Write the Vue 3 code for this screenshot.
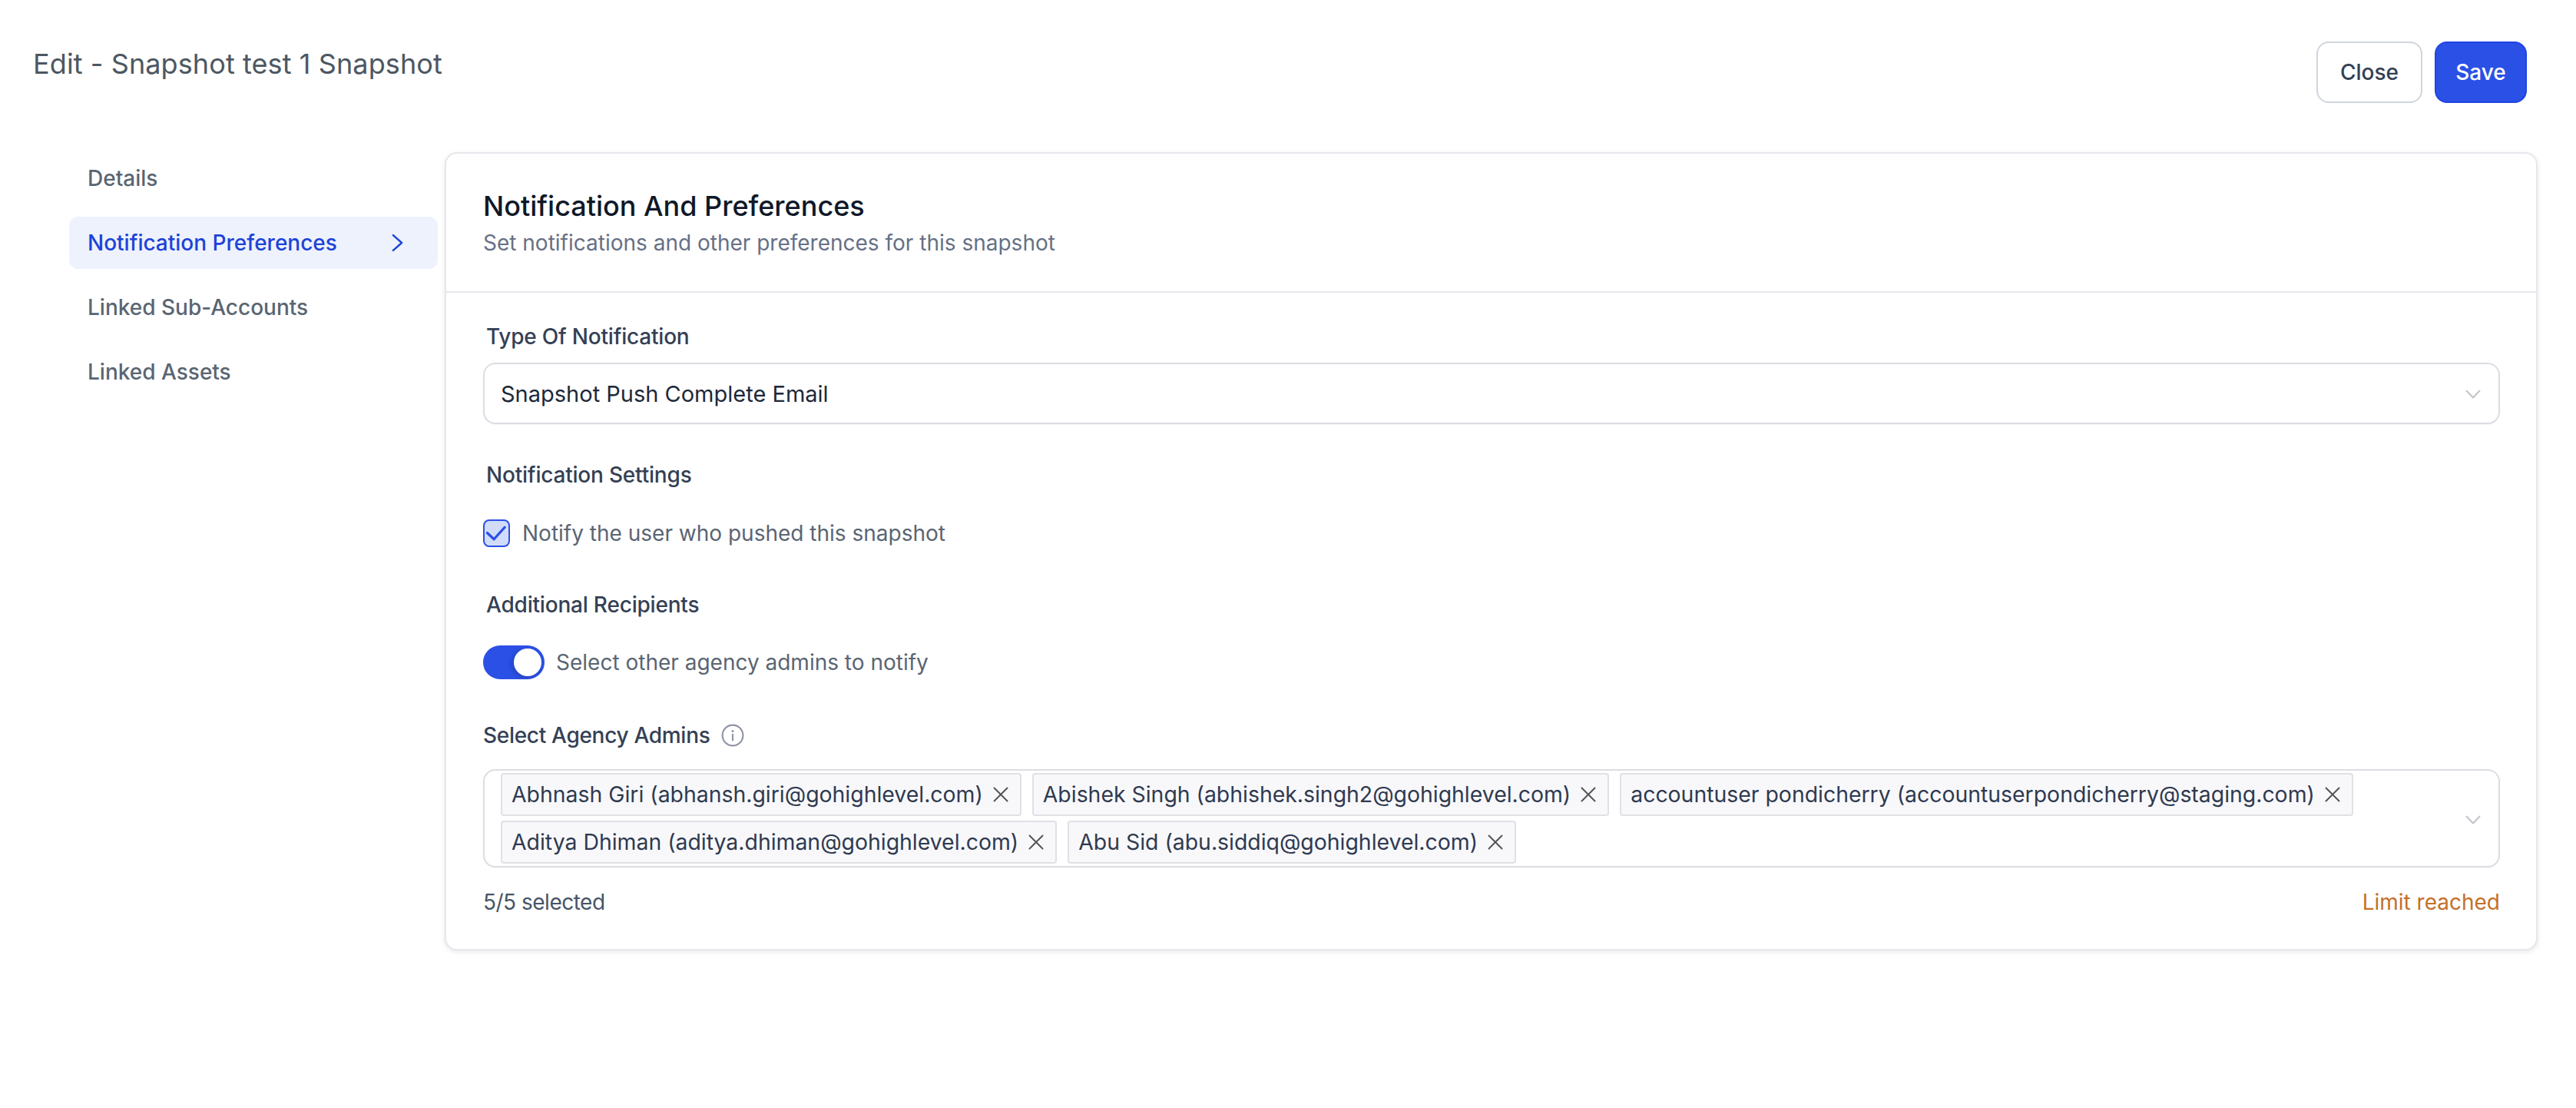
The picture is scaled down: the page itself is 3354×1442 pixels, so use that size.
<script setup>
const navItems = [
  { label: 'Details', active: false },
  { label: 'Notification Preferences', active: true },
  { label: 'Linked Sub-Accounts', active: false },
  { label: 'Linked Assets', active: false },
]
const admins = [
  'Abhnash Giri (abhansh.giri@gohighlevel.com)',
  'Abishek Singh (abhishek.singh2@gohighlevel.com)',
  'accountuser pondicherry (accountuserpondicherry@staging.com)',
  'Aditya Dhiman (aditya.dhiman@gohighlevel.com)',
  'Abu Sid (abu.siddiq@gohighlevel.com)',
]
</script>

<template>
  <div class="page">
    <header class="top">
      <h1 class="title">Edit - Snapshot test 1 Snapshot</h1>
      <div class="actions">
        <button class="btn close">Close</button>
        <button class="btn save">Save</button>
      </div>
    </header>
    <main class="main">
      <nav class="nav">
        <div v-for="item in navItems" :key="item.label" class="nav-item" :class="{ active: item.active }">
          <span>{{ item.label }}</span>
          <svg v-if="item.active" class="nav-chev" viewBox="0 0 16 24" fill="none">
            <path d="M2 1.5 L14 12 L2 22.5" stroke="currentColor" stroke-width="2.6" stroke-linecap="round" stroke-linejoin="round" />
          </svg>
        </div>
      </nav>
      <section class="card">
        <div class="card-head">
          <h2 class="card-title">Notification And Preferences</h2>
          <p class="card-sub">Set notifications and other preferences for this snapshot</p>
        </div>
        <div class="card-body">
          <div class="label inset">Type Of Notification</div>
          <div class="select single">
            <span>Snapshot Push Complete Email</span>
            <svg class="chev" viewBox="0 0 20 12" fill="none">
              <path d="M1 1 L10 10.5 L19 1" stroke="#c2c4c8" stroke-width="2" stroke-linejoin="round" />
            </svg>
          </div>

          <div class="label inset settings">Notification Settings</div>
          <div class="check-row">
            <span class="checkbox">
              <svg viewBox="0 0 32 32" fill="none">
                <path d="M3.5 15.5 L12.5 24 L27 8" stroke="#2b50e6" stroke-width="3.4" stroke-linecap="round" stroke-linejoin="round" />
              </svg>
            </span>
            <span class="muted">Notify the user who pushed this snapshot</span>
          </div>

          <div class="label inset recipients">Additional Recipients</div>
          <div class="toggle-row">
            <span class="toggle"><span class="knob"></span></span>
            <span class="muted">Select other agency admins to notify</span>
          </div>

          <div class="label admins-label">
            <span>Select Agency Admins</span>
            <svg class="info" viewBox="0 0 28 28" fill="none">
              <circle cx="14" cy="14" r="12.5" stroke="#8f94a8" stroke-width="2" />
              <path d="M14 13 V20" stroke="#8f94a8" stroke-width="2" stroke-linecap="round" />
              <circle cx="14" cy="8.8" r="1.4" fill="#8f94a8" />
            </svg>
          </div>
          <div class="select multi">
            <div class="tags">
              <span v-for="admin in admins" :key="admin" class="tag">
                <span>{{ admin }}</span>
                <svg class="tag-x" viewBox="0 0 20 20" fill="none">
                  <path d="M1.5 1.5 L18.5 18.5 M18.5 1.5 L1.5 18.5" stroke="#555" stroke-width="2" stroke-linecap="round" />
                </svg>
              </span>
            </div>
            <svg class="chev multi-chev" viewBox="0 0 20 12" fill="none">
              <path d="M1 1 L10 10.5 L19 1" stroke="#c2c4c8" stroke-width="2" stroke-linejoin="round" />
            </svg>
          </div>
          <div class="foot">
            <span class="count">5/5 selected</span>
            <span class="limit">Limit reached</span>
          </div>
        </div>
      </section>
    </main>
  </div>
</template>

<style>
html, body { margin: 0; background: #fff; }
</style>

<style scoped>
.page {
  box-sizing: border-box;
  width: 3354px;
  min-height: 1442px;
  padding: 54px 50px 0 43px;
  background: #fff;
  font-family: Inter, "Liberation Sans", sans-serif;
  font-size: 28px;
  line-height: 40px;
  color: #344054;
}
.top { display: flex; justify-content: space-between; align-items: flex-start; padding-right: 14px; }
.title { margin: 0; font-size: 36px; line-height: 58px; font-weight: 400; letter-spacing: 0.1px; color: #4d5761; }
.actions { display: flex; gap: 16px; }
.btn {
  box-sizing: border-box;
  height: 80px;
  border-radius: 16px;
  font-family: inherit;
  font-size: 28px;
  font-weight: 500;
  padding: 0;
}
.close { width: 138px; background: #fff; border: 2px solid #d0d5dd; color: #344054; }
.save { width: 120px; background: #2b50e6; border: 2px solid #1f45e3; color: #fff; }

.main { display: flex; margin-top: 64px; margin-left: 47px; gap: 9px; align-items: flex-start; }
.nav { width: 480px; display: flex; flex-direction: column; gap: 16px; flex: none; }
.nav-item {
  box-sizing: border-box;
  height: 68px;
  padding: 0 24px;
  border-radius: 12px;
  display: flex;
  align-items: center;
  justify-content: space-between;
  font-weight: 450;
  color: #5a6572;
}
.nav-item.active { background: #eef2fd; color: #1d43d8; }
.nav-chev { width: 15px; height: 24px; margin-right: 21px; }

.card {
  box-sizing: border-box;
  flex: 1;
  height: 1039px;
  background: #fff;
  border: 2px solid #e6e7ec;
  border-radius: 16px;
  box-shadow: 0 2px 6px rgba(16, 24, 40, 0.1);
}
.card-head { padding: 44px 48px 43px; border-bottom: 2px solid #e6e7ec; }
.card-title { margin: 0; font-size: 36px; line-height: 48px; font-weight: 500; color: #101828; }
.card-sub { margin: 4px 0 0; font-size: 28px; line-height: 40px; color: #667085; }
.card-body { padding: 37px 47px 41px 48px; }

.label { font-weight: 450; letter-spacing: -0.2px; color: #344054; }
.inset { padding-left: 4px; }
.settings { margin-top: 46px; }
.recipients { margin-top: 53px; }

.select {
  box-sizing: border-box;
  width: 100%;
  background: #fff;
  border: 2px solid #dcdde3;
  border-radius: 16px;
  position: relative;
  box-shadow: 0 1px 2px rgba(16, 24, 40, 0.04);
}
.single {
  height: 80px;
  margin-top: 14px;
  padding: 2px 23px 0 21px;
  display: flex;
  align-items: center;
  justify-content: space-between;
  font-size: 29px;
  color: #1d2939;
}
.chev { width: 20px; height: 12px; flex: none; }

.check-row { display: flex; align-items: center; gap: 16px; margin-top: 36px; height: 40px; }
.checkbox {
  box-sizing: border-box;
  width: 35px;
  height: 36px;
  border: 2px solid #2b50e6;
  border-radius: 8px;
  background: #d1dcfb;
  display: flex;
  align-items: center;
  justify-content: center;
}
.checkbox svg { width: 31px; height: 32px; }
.muted { color: #5a6572; }

.toggle-row { display: flex; align-items: center; gap: 15px; margin-top: 33px; height: 44px; }
.toggle {
  box-sizing: border-box;
  width: 80px;
  height: 44px;
  padding: 4px;
  border-radius: 22px;
  background: #2b50e6;
  display: flex;
  justify-content: flex-end;
}
.knob { width: 36px; height: 36px; border-radius: 50%; background: #fff; box-shadow: -3px 2px 6px rgba(16, 24, 40, 0.2); }

.admins-label { display: flex; align-items: center; gap: 15px; margin-top: 53px; letter-spacing: -0.3px; }
.info { width: 30px; height: 30px; }

.multi { height: 128px; margin-top: 24px; padding: 3px 60px 0 21px; }
.tags { display: flex; flex-wrap: wrap; gap: 6px 14px; }
.tag {
  box-sizing: border-box;
  height: 56px;
  padding: 0 15px 0 12px;
  display: flex;
  align-items: center;
  gap: 13px;
  background: #f8f8fb;
  border: 2px solid #e0e0e6;
  border-radius: 4px;
  font-size: 28.4px;
  color: #2f3a4f;
  white-space: nowrap;
}
.tag-x { width: 20px; height: 20px; flex: none; }
.multi-chev { position: absolute; right: 23px; top: 58px; }

.foot { display: flex; justify-content: space-between; margin-top: 25px; }
.count { color: #475467; letter-spacing: -0.5px; }
.limit { color: #c4702a; }
</style>
